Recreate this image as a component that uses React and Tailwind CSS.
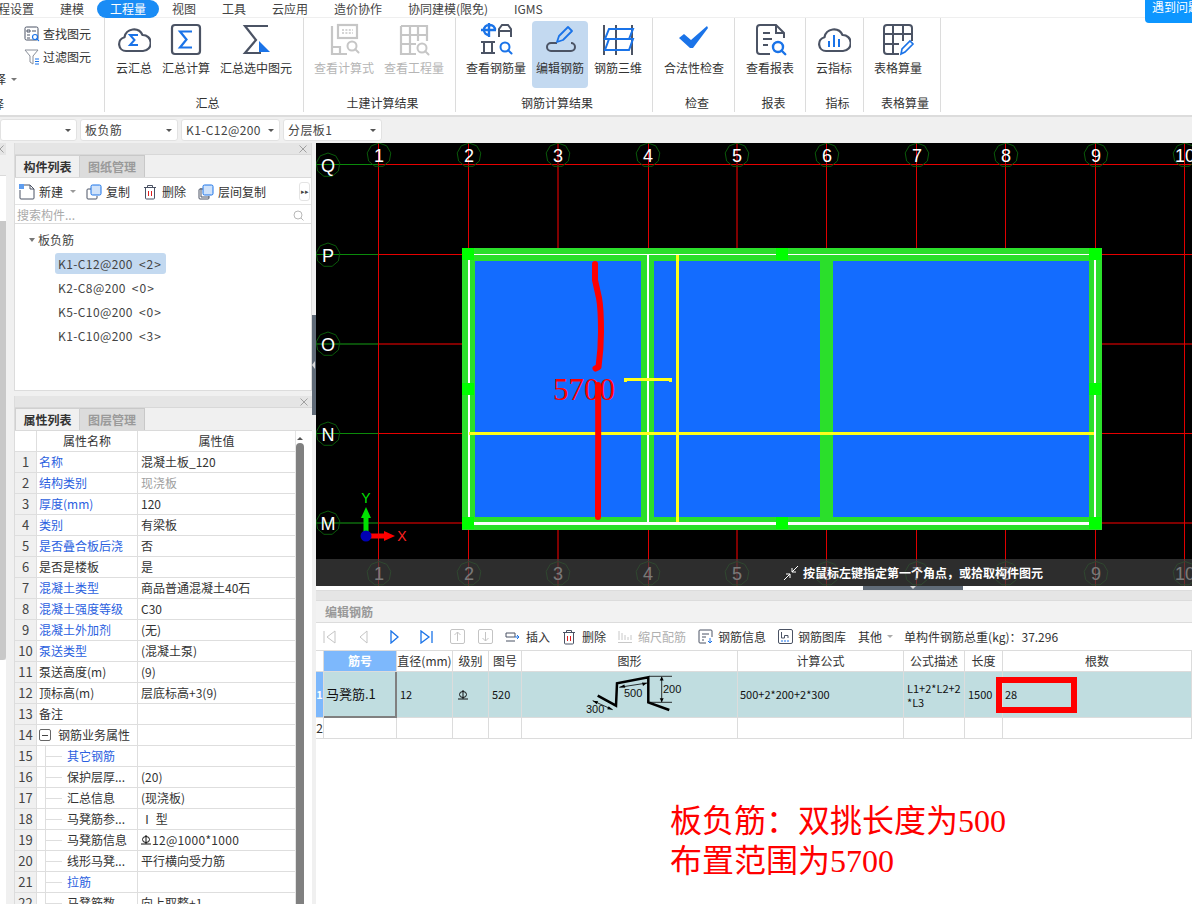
import { ChevronDown } from "lucide-react";

const DARK = "#4b5364";
const BLUE = "#1a73e8";
const GRAY = "#c6c6c6";

const CloudShape = ({ color = DARK }) => (
  <path d="M9 29a7 7 0 0 1-1.5-13.8A9.5 9.5 0 0 1 25.5 13a8 8 0 0 1 .5 16z" fill="none" stroke={color} strokeWidth="2.2" strokeLinejoin="round" />
);

const Lens = ({ x, y, r = 4, color = BLUE, w = 2 }) => (
  <g fill="none" stroke={color} strokeWidth={w}>
    <circle cx={x} cy={y} r={r} />
    <path d={`M${x + r * 0.7} ${y + r * 0.7}l${r * 0.75} ${r * 0.75}`} strokeLinecap="round" />
  </g>
);

const Icon = ({ children }) => (
  <svg width="34" height="34" viewBox="0 0 34 34" className="shrink-0">{children}</svg>
);

const icons = {
  cloudSum: (
    <Icon>
      <CloudShape />
      <path d="M21 13h-8l4.500 5-4.500 5h8" fill="none" stroke={BLUE} strokeWidth="2" />
    </Icon>
  ),
  sumBox: (
    <Icon>
      <rect x="3" y="3" width="28" height="29" rx="3" fill="none" stroke={DARK} strokeWidth="2.200" />
      <path d="M23 9.500H11l6.500 8-6.500 8h12" fill="none" stroke={BLUE} strokeWidth="2.200" />
    </Icon>
  ),
  sumPick: (
    <Icon>
      <path d="M29 4H6l11 14L6 31h16" fill="none" stroke={DARK} strokeWidth="2.200" />
      <path d="M20 19l11 11H20z" fill={BLUE} />
    </Icon>
  ),
  formula: (
    <Icon>
      <path d="M5 4v28h15M5 25h8v7" fill="none" stroke={GRAY} strokeWidth="2.200" />
      <rect x="11" y="3" width="19" height="13" fill="none" stroke={GRAY} strokeWidth="2.200" />
      <path d="M15 8h11M15 11h11" stroke={GRAY} strokeWidth="1.600" strokeDasharray="2 1.400" />
      <Lens x={25} y={24} r={4.500} color={GRAY} />
    </Icon>
  ),
  quantity: (
    <Icon>
      <path d="M4 4h26v15M4 4v28h15M4 13h26M4 22h15M13 4v28M21 4v15" fill="none" stroke={GRAY} strokeWidth="2.200" />
      <Lens x={25} y={26} r={4.500} color={GRAY} />
    </Icon>
  ),
  rebarView: (
    <Icon>
      <path d="M2 8h15M10 1v14M10 3a5 5 0 0 0 0 10M11 3a5 5 0 0 1 5 5" fill="none" stroke={BLUE} strokeWidth="2.400" />
      <path d="M20 15V7l3-4h6l3 4v8M20 9h12" fill="none" stroke={DARK} strokeWidth="2" />
      <path d="M2 20h14M2 31h14M5 20v11M13 20v11" fill="none" stroke={DARK} strokeWidth="2" />
      <Lens x={26} y={25} r={4.500} />
    </Icon>
  ),
  rebarEdit: (
    <Icon>
      <path d="M13 21H7a4 4 0 0 0 0 8h20a4 4 0 0 0 0-8" fill="none" stroke={DARK} strokeWidth="2" transform="translate(1 0)" />
      <path d="M14 20l2-6L25 5l4 4-9 9z" fill="none" stroke={BLUE} strokeWidth="1.800" strokeLinejoin="round" />
    </Icon>
  ),
  rebar3d: (
    <Icon>
      <path d="M3 3v30M15 3v30M31 3v30" stroke={DARK} strokeWidth="2" />
      <path d="M8 7h24l-4 10H4zM8 17h24l-4 11H4z" fill="none" stroke={BLUE} strokeWidth="2" />
    </Icon>
  ),
  check: (
    <Icon>
      <path d="M2 16l5-4 7 6L30 4l1 2-15 20h-3z" fill={BLUE} />
    </Icon>
  ),
  report: (
    <Icon>
      <path d="M17 32H7a3 3 0 0 1-3-3V6a3 3 0 0 1 3-3h16l8 8v5M23 3v8h8" fill="none" stroke={DARK} strokeWidth="2" />
      <path d="M10 11h7M10 17h9M10 23h5" stroke={DARK} strokeWidth="2" />
      <Lens x={25} y={25} r={5} w={2.400} />
    </Icon>
  ),
  cloudBars: (
    <Icon>
      <CloudShape />
      <path d="M12 19v6M17 13v12M22 17v8" stroke={BLUE} strokeWidth="2" />
    </Icon>
  ),
  tableEdit: (
    <Icon>
      <path d="M18 32H6a3 3 0 0 1-3-3V6a3 3 0 0 1 3-3h22a3 3 0 0 1 3 3v13M3 12h28M3 22h15M12 3v29M22 3v16" fill="none" stroke={DARK} strokeWidth="2" />
      <path d="M20 32l1-5 8-8 3 3-8 8z" fill="none" stroke={BLUE} strokeWidth="1.600" />
    </Icon>
  ),
};

const RibbonItem = ({ icon, label, gray, active }) => (
  <div className={`flex h-[67px] flex-col items-center rounded-sm px-1 pt-[1px] ${active ? "bg-[#c3d9f0]" : ""}`}>
    {icons[icon]}
    <span className={`mt-[3px] whitespace-nowrap leading-[18px] ${gray ? "text-[#b5b5b5]" : "text-[#333]"}`}>{label}</span>
  </div>
);

const RibbonGroup = ({ width, label, items, pad = "pl-[6px]" }) => (
  <div className={`flex h-[94px] shrink-0 flex-col border-r border-[#dcdcdc] pt-[3px] ${width} ${pad}`}>
    <div className="flex gap-[2px]">
      {items.map((it) => (
        <RibbonItem key={it.label} {...it} />
      ))}
    </div>
    <div className="mt-auto text-center leading-[18px] text-[#333]">{label}</div>
  </div>
);

const Select = ({ children, width }) => (
  <div className={`flex h-[22px] shrink-0 items-center justify-between rounded-[3px] border border-[#e2e2e2] bg-white pl-1 pr-[5px] tracking-[0.4px] text-[#444] ${width}`}>
    <span className="whitespace-nowrap">{children}</span>
    <span className="h-0 w-0 border-x-[3px] border-t-[3px] border-x-transparent border-t-[#555]" />
  </div>
);

const Close = () => (
  <svg width="8" height="8" viewBox="0 0 8 8"><path d="M.5.5l7 7M7.500.5l-7 7" stroke="#a0a0a0" /></svg>
);

const PanelHead = () => (
  <div className="flex h-[12px] items-center justify-end border-b border-[#d8d8d8] bg-[#e5e5e5] pr-1"><Close /></div>
);

const Tabs = ({ first, second }) => (
  <div className="flex h-[23px] border-b border-[#dadada] bg-[#f0f0f0]">
    <div className="flex w-[65px] items-center justify-center border-x border-t border-[#d0d0d0] font-bold text-[#333]">{first}</div>
    <div className="flex w-[65px] items-center justify-center border-r border-t border-[#c8c8c8] bg-[#dcdcdc] font-bold text-[#9a9a9a]">{second}</div>
  </div>
);

const CopySquare = ({ stack }) => (
  <svg width="16" height="16" viewBox="0 0 16 16">
    <path d="M5 5H2a1 1 0 0 0-1 1v8a1 1 0 0 0 1 1h8a1 1 0 0 0 1-1v-2" fill="none" stroke={DARK} />
    {stack && <path d="M3 4v9h8" fill="none" stroke={DARK} />}
    <rect x="5" y="1" width="10" height="10" rx="1.500" fill="#cfe2fa" stroke={BLUE} />
  </svg>
);

const TrashIcon = () => (
  <svg width="14" height="16" viewBox="0 0 14 16" fill="none">
    <path d="M1 3.500h12M4.500 3V1.500h5V3M2.500 3.500v10.500a1 1 0 0 0 1 1h7a1 1 0 0 0 1-1V3.500" stroke={DARK} />
    <path d="M5.500 7v5M8.500 7v5" stroke="#e02020" />
  </svg>
);

const NewIcon = () => (
  <svg width="16" height="16" viewBox="0 0 16 16" fill="none">
    <path d="M5 1h6l4 4v9a1 1 0 0 1-1 1H2a1 1 0 0 1-1-1V6M11 1v4h4" stroke={DARK} />
    <rect x="0" y="0" width="5" height="5" fill={BLUE} opacity=".7" />
  </svg>
);

const GradeMark = () => (
  <svg width="10" height="10" viewBox="0 0 10 10" fill="none" className="inline-block">
    <ellipse cx="5" cy="4.500" rx="3.500" ry="3" stroke="#111" />
    <path d="M5 0v9M0 9h10" stroke="#111" />
  </svg>
);

const listRows = ["K2-C8@200", "K5-C10@200", "K1-C10@200"];
const listCounts = ["<0>", "<0>", "<3>"];

const props = [
  ["名称", "混凝土板_120", true],
  ["结构类别", "现浇板", true, 0, "gray"],
  ["厚度(mm)", "120", true],
  ["类别", "有梁板", true],
  ["是否叠合板后浇", "否", true],
  ["是否是楼板", "是"],
  ["混凝土类型", "商品普通混凝土40石", true],
  ["混凝土强度等级", "C30", true],
  ["混凝土外加剂", "(无)", true],
  ["泵送类型", "(混凝土泵)", true],
  ["泵送高度(m)", "(9)"],
  ["顶标高(m)", "层底标高+3(9)"],
  ["备注", ""],
  ["钢筋业务属性", "", false, 2],
  ["其它钢筋", "", true, 1],
  ["保护层厚...", "(20)", false, 1],
  ["汇总信息", "(现浇板)", false, 1],
  ["马凳筋参...", "Ⅰ 型", false, 1],
  ["马凳筋信息", "12@1000*1000", false, 1, "mark"],
  ["线形马凳...", "平行横向受力筋", false, 1],
  ["拉筋", "", true, 1],
  ["马凳筋数", "向上取整+1", false, 1],
];

const PropRow = ({ n, row }) => {
  const [name, value, blue, kind, extra] = row;
  return (
    <div className="grid h-[21px] grid-cols-[22px_101px_157px] border-b border-[#dedede] leading-[20px]">
      <div className="border-r border-[#dedede] bg-[#f0f0f0] text-center text-[13px] text-[#444]">{n}</div>
      <div className={`relative flex items-center overflow-hidden whitespace-nowrap border-r border-[#dedede] ${kind === 1 ? "pl-[30px]" : kind === 2 ? "pl-[21px]" : "pl-[2px]"} ${blue ? "text-[#2b5fe0]" : "text-[#333]"}`}>
        {kind === 2 && (
          <span className="absolute left-[2px] top-[4px] flex h-[12px] w-[12px] items-center justify-center rounded-[2px] border border-[#666]">
            <span className="h-px w-[6px] bg-[#444]" />
          </span>
        )}
        {kind === 1 && (
          <>
            <span className="absolute left-[8px] top-0 h-full w-px bg-[#dedede]" />
            <span className="absolute left-[9px] top-[10px] h-px w-[16px] bg-[#dedede]" />
          </>
        )}
        {name}
      </div>
      <div className={`flex items-center gap-px whitespace-nowrap pl-[3px] ${extra === "gray" ? "text-[#a0a0a0]" : "text-[#333]"} ${extra === "mark" ? "tracking-[0.3px]" : ""}`}>
        {extra === "mark" && <GradeMark />}
        {value}
      </div>
    </div>
  );
};

const ToolBtn = ({ icon, label, gray, ml, gap = "gap-[6px]" }) => (
  <div className={`flex shrink-0 items-center ${gap} ${ml}`}>
    {icon}
    <span className={gray ? "text-[#b0b0b0]" : "text-[#333]"}>{label}</span>
  </div>
);

const colX = [
  [378.5, "1"], [468.5, "2"], [558, "3", true], [648, "4"], [737, "5", true],
  [826.5, "6"], [916.5, "7"], [1005.5, "8"], [1095.5, "9"], [1184.5, "10"],
];
const rowY = [
  [164.5, "Q"], [254.5, "P"], [344, "O", true], [433.5, "N"], [523, "M", true],
];

const ring = (cx, cy, r = 12, n = 9) =>
  Array.from({ length: n }, (_, i) => {
    const a = (i / n) * Math.PI * 2 - Math.PI / 2;
    return `${(cx + r * Math.cos(a)).toFixed(1)},${(cy + r * Math.sin(a)).toFixed(1)}`;
  }).join(" ");

const Axis = ({ cx, cy, label }) => (
  <g>
    <polygon points={ring(cx, cy)} fill="none" stroke="#0a5a0a" />
    <text x={cx} y={cy + 6.5} textAnchor="middle" fontSize="18" fill="#fff" fontFamily="'Liberation Sans', sans-serif">{label}</text>
  </g>
);

const handles = [
  [468, 254], [1095, 254], [468, 523], [1095, 523],
  [468, 389], [1095, 389], [782, 254], [782, 523],
];

const PlanCanvas = () => (
  <svg width="876" height="443" viewBox="316 143 876 443" className="block">
    <rect x="316" y="143" width="876" height="443" fill="#000" />
    <g shapeRendering="crispEdges">
      {rowY.map(([y, , dim]) => (
        <g key={y}>
          <line x1="316" x2="378" y1={y} y2={y} stroke={dim ? "#0a4f0a" : "#0b8a0b"} strokeWidth={dim ? 2 : 1} />
          <line x1="378" x2="1192" y1={y} y2={y} stroke={dim ? "#800000" : "#e60000"} strokeWidth={dim ? 2 : 1} />
        </g>
      ))}
      {colX.map(([x, , dim]) => (
        <line key={x} x1={x} x2={x} y1="143" y2="586" stroke={dim ? "#800000" : "#e00000"} strokeWidth={dim ? 2 : 1} />
      ))}
      <rect x="462" y="248" width="640" height="282" fill="#2bdf2b" />
      <rect x="475" y="261" width="614" height="256" fill="#136cff" />
      <rect x="641" y="261" width="13" height="256" fill="#2bdf2b" />
      <rect x="820" y="261" width="13" height="256" fill="#2bdf2b" />
      <g fill="#fff">
        <rect x="468" y="254" width="628" height="1" />
        <rect x="468" y="522" width="628" height="3" />
        <rect x="468" y="254" width="2" height="270" />
        <rect x="1094" y="254" width="2" height="270" />
        <rect x="647" y="254" width="2" height="269" />
      </g>
      <rect x="676" y="255" width="3" height="267" fill="#ffff1a" />
      <rect x="469" y="432" width="625" height="3" fill="#ffff1a" />
      <path d="M625 382v-3h45v3" fill="none" stroke="#ffff1a" strokeWidth="3" />
      {handles.map(([x, y]) => (
        <rect key={`${x}-${y}`} x={x - 6} y={y - 6} width="12" height="12" fill="#00ff00" />
      ))}
    </g>
    {colX.map(([x, label]) => (
      <g key={label}>
        <Axis cx={Math.round(x)} cy={155} label={label} />
        <Axis cx={Math.round(x)} cy={573.5} label={label} />
      </g>
    ))}
    {rowY.map(([y, label]) => (
      <Axis key={label} cx={328} cy={Math.round(y)} label={label} />
    ))}
    <path d="M595 264v16l4 18c2 10 2 22 2 34 0 12-1 24-2.500 35l-3 1.500" fill="none" stroke="#ff0000" strokeWidth="6" strokeLinecap="round" strokeLinejoin="round" />
    <path d="M598 385c.5 30 0 90 0 132" fill="none" stroke="#ff0000" strokeWidth="6" strokeLinecap="round" />
    <text x="553" y="400" fontSize="31" fill="#ff0000" fontFamily="'Liberation Serif', serif">5700</text>
    <line x1="366" x2="366" y1="536" y2="515" stroke="#00e000" strokeWidth="5" />
    <path d="M361 518l5-11 5 11z" fill="#00e000" />
    <line x1="366" x2="386" y1="536" y2="536" stroke="#ff0000" strokeWidth="5" />
    <path d="M384 531l11 5-11 5z" fill="#ff0000" />
    <circle cx="366" cy="536" r="5.5" fill="#0000b4" />
    <text x="366" y="503" textAnchor="middle" fontSize="14" fill="#00e000" fontFamily="'Liberation Sans', sans-serif">Y</text>
    <text x="402" y="541" textAnchor="middle" fontSize="14" fill="#ff2020" fontFamily="'Liberation Sans', sans-serif">X</text>
  </svg>
);

const BentBar = () => (
  <svg width="216" height="45" viewBox="0 0 216 45" className="absolute left-0 top-0">
    <path d="M75.700 23.700L94 33.700 95 11.300 126.300 5.300V30.300L147.300 38" fill="none" stroke="#000" strokeWidth="2.500" />
    <g stroke="#000" fill="none" strokeWidth=".8">
      <path d="M127 4.300H150M127 30.300H150M139.700 5V30" />
      <path d="M97.300 15.300L125 11M70.700 28.700L90.700 37.700" />
    </g>
    <path d="M139.700 4.500l-2 4h4zM139.700 30.300l-2-4h4zM125 11l-5 -.500 1 3.500zM97.300 15.300l5 -2.800 1 3.300zM70.700 28.700l5.500 .500-1.500 3zM90.700 37.700l-5.500 -.500 1.500-3z" fill="#000" />
    <g fontSize="11" fill="#111" fontFamily="'Liberation Sans', sans-serif">
      <text x="141" y="21">200</text>
      <text x="102" y="25">500</text>
      <text x="64" y="41">300</text>
    </g>
  </svg>
);

const cols = "grid grid-cols-[8px_73px_56px_36px_33px_216px_166px_61px_38px_189px]";
const cell = "border-r border-b border-[#dcdcdc]";
const heads = ["筋号", "直径(mm)", "级别", "图号", "图形", "计算公式", "公式描述", "长度", "根数"];

export default function App() {
  return (
    <div className="relative flex h-[904px] w-[1192px] flex-col overflow-hidden bg-[#f0f0f0] text-[12px] [font-family:'Noto_Sans_CJK_SC','Liberation_Sans',sans-serif]">
      {/* top menu */}
      <div className="relative flex h-[18px] shrink-0 items-center border-b border-[#efefef] bg-white text-[#444]">
        <span className="-ml-[14px] w-[74px] whitespace-nowrap">工程设置</span>
        <span className="w-[37px]">建模</span>
        <span className="flex h-[18px] w-[62px] items-center justify-center rounded-[9px] bg-[#1a8cf5] text-white">工程量</span>
        <span className="ml-[13px] w-[50px]">视图</span>
        <span className="w-[50px]">工具</span>
        <span className="w-[62px]">云应用</span>
        <span className="w-[74px]">造价协作</span>
        <span className="w-[106px]">协同建模(限免)</span>
        <span>IGMS</span>
        <div className="absolute right-0 top-0 h-[23px] w-[47px] overflow-hidden whitespace-nowrap rounded-bl-[4px] bg-[#0d96ff] pl-[7px] leading-[14px] text-white">遇到问题</div>
      </div>

      {/* ribbon */}
      <div className="flex h-[99px] shrink-0 border-b-2 border-[#dcdcdc] bg-white">
        <div className="relative h-[94px] w-[105px] shrink-0 border-r border-[#dcdcdc] text-[#333]">
          <div className="absolute left-[24px] top-[7px] flex items-center gap-[3px] whitespace-nowrap">
            <svg width="16" height="16" viewBox="0 0 16 16" fill="none">
              <rect x="1" y="1" width="13" height="13" rx="1.500" stroke={DARK} />
              <path d="M3 4h3v2H3zM8 5h4M3 9h3M3 12h3" stroke={DARK} />
              <Lens x={11} y={11} r={2.500} w={1.200} />
            </svg>
            查找图元
          </div>
          <div className="absolute left-[24px] top-[30px] flex items-center gap-[3px] whitespace-nowrap">
            <svg width="16" height="16" viewBox="0 0 16 16" fill="none">
              <path d="M1 1h13L9 7v8L6 13V7z" stroke="#8a8f99" />
              <path d="M11 10h4M11 12.500h4M11 15h4" stroke={BLUE} />
            </svg>
            过滤图元
          </div>
          <div className="absolute left-[-18px] top-[52px] flex items-center gap-[5px] whitespace-nowrap">
            选择
            <span className="h-0 w-0 border-x-[3px] border-t-[3px] border-x-transparent border-t-[#777]" />
          </div>
          <div className="absolute -left-[20px] top-[77px] whitespace-nowrap">选择</div>
        </div>
        <RibbonGroup width="w-[199px]" pad="pl-[7px]" label="汇总" items={[{ icon: "cloudSum", label: "云汇总" }, { icon: "sumBox", label: "汇总计算" }, { icon: "sumPick", label: "汇总选中图元" }]} />
        <RibbonGroup width="w-[152px]" label="土建计算结果" items={[{ icon: "formula", label: "查看计算式", gray: true }, { icon: "quantity", label: "查看工程量", gray: true }]} />
        <RibbonGroup width="w-[197px]" label="钢筋计算结果" items={[{ icon: "rebarView", label: "查看钢筋量" }, { icon: "rebarEdit", label: "编辑钢筋", active: true }, { icon: "rebar3d", label: "钢筋三维" }]} />
        <RibbonGroup width="w-[82px]" pad="pl-[7px]" label="检查" items={[{ icon: "check", label: "合法性检查" }]} />
        <RibbonGroup width="w-[71px]" pad="pl-[7px]" label="报表" items={[{ icon: "report", label: "查看报表" }]} />
        <RibbonGroup width="w-[58px]" pad="pl-[6px]" label="指标" items={[{ icon: "cloudBars", label: "云指标" }]} />
        <RibbonGroup width="w-[77px]" pad="pl-[6px]" label="表格算量" items={[{ icon: "tableEdit", label: "表格算量" }]} />
      </div>

      {/* selectors */}
      <div className="flex h-[26px] shrink-0 items-center gap-[3px]">
        <Select width="w-[77px]"> </Select>
        <Select width="w-[98px]">板负筋</Select>
        <Select width="w-[99px]">K1-C12@200</Select>
        <Select width="w-[99px]">分层板1</Select>
      </div>

      <div className="flex min-h-0 flex-1">
        {/* collapsed neighbour panel */}
        <div className="flex w-[14px] shrink-0 flex-col">
          <div className="flex h-[12px] w-[6px] items-center overflow-hidden bg-[#e5e5e5]"><span className="-ml-1"><Close /></span></div>
          <div className="h-[21px] w-[6px] border-b border-[#dadada]" />
          <div className="h-[45px] w-[6px] bg-white" />
          <div className="h-[439px] w-[6px] rounded-br-[3px] bg-[#c8c8c8]" />
          <div className="w-[6px] flex-1 bg-white" />
        </div>

        {/* left panels */}
        <div className="flex w-[298px] shrink-0 flex-col">
          <div className="flex h-[248px] flex-col border-x border-b border-[#dcdcdc] bg-white">
            <PanelHead />
            <Tabs first="构件列表" second="图纸管理" />
            <div className="flex h-[27px] shrink-0 items-center border-b border-[#e4e4e4] pl-[4px] pt-px text-[#333]">
              <ToolBtn gap="gap-[4px]" icon={<NewIcon />} label="新建" />
              <span className="ml-[7px] h-0 w-0 border-x-[3px] border-t-[3px] border-x-transparent border-t-[#999]" />
              <ToolBtn gap="gap-[4px]" icon={<CopySquare />} label="复制" ml="ml-[10px]" />
              <ToolBtn gap="gap-[5px]" icon={<TrashIcon />} label="删除" ml="ml-[13px]" />
              <ToolBtn gap="gap-[4px]" icon={<CopySquare stack />} label="层间复制" ml="ml-[12px]" />
              <span className="ml-auto mr-[1px] flex h-[19px] w-[11px] items-center justify-center rounded-[3px] border border-[#e4e4e4] text-[7px] leading-none text-[#444]">▸▸</span>
            </div>
            <div className="flex h-[19px] shrink-0 items-center justify-between border-b border-[#dcdcdc] pl-[2px] pr-[7px] pt-[2px] text-[#aaa]">
              <span>搜索构件...</span>
              <Lens2 />
            </div>
            <div className="flex flex-col pl-[14px] text-[#444]">
              <div className="mt-[7px] flex h-[18px] items-center gap-[2px]">
                <span className="h-0 w-0 border-x-[3.500px] border-t-[4px] border-x-transparent border-t-[#777]" />
                <span className="ml-[1px]">板负筋</span>
              </div>
              <div className="ml-[26px] mt-[4px] flex h-[21px] w-[111px] items-center gap-[6px] rounded-[3px] bg-[#c3d9f0] pl-[3px] tracking-[0.4px]">
                K1-C12@200 <span className="tracking-[1px]">&lt;2&gt;</span>
              </div>
              {listRows.map((r, i) => (
                <div key={r} className="ml-[26px] mt-[3px] flex h-[21px] items-center gap-[6px] pl-[3px] tracking-[0.4px]">
                  {r} <span className="tracking-[1px]">{listCounts[i]}</span>
                </div>
              ))}
            </div>
          </div>
          <div className="h-[5px] shrink-0" />
          <div className="flex min-h-0 flex-1 flex-col overflow-hidden border-l border-[#dcdcdc] bg-white">
            <PanelHead />
            <Tabs first="属性列表" second="图层管理" />
            <div className="flex min-h-0 flex-1">
              <div className="w-[280px] shrink-0">
                <div className="grid h-[21px] grid-cols-[22px_101px_157px] border-b border-[#dedede] text-center leading-[20px] text-[#333]">
                  <div className="border-r border-[#dedede]" />
                  <div className="border-r border-[#dedede]">属性名称</div>
                  <div>属性值</div>
                </div>
                {props.map((row, i) => (
                  <PropRow key={row[0]} n={i + 1} row={row} />
                ))}
              </div>
              <div className="flex flex-1 flex-col items-center border-l border-[#e4e4e4] pr-[8px] pt-[6px]">
                <span className="h-0 w-0 border-x-[3px] border-b-[3px] border-x-transparent border-b-[#555]" />
                <div className="mt-[3px] w-[8px] flex-1 rounded-t-[4px] bg-[#808080]" />
              </div>
            </div>
          </div>
        </div>

        {/* splitter */}
        <div className="w-[4px] shrink-0">
          <div className="mt-[172px] flex h-[100px] items-center bg-[#606b78]">
            <span className="h-0 w-0 border-y-[4px] border-r-[3px] border-y-transparent border-r-[#d8d8d8]" />
          </div>
        </div>

        {/* right side */}
        <div className="flex min-w-0 flex-1 flex-col">
          <div className="relative h-[443px] shrink-0 overflow-hidden">
            <PlanCanvas />
            <div className="absolute inset-x-0 bottom-0 flex h-[27px] items-center bg-[#404040]/70 pl-[467px] font-bold text-white">
              <svg width="16" height="16" viewBox="0 0 16 16" fill="none" stroke="#fff" className="mr-[4px]">
                <path d="M15 1L9 7M9 3v4h4M1 15l6-6M3 9h4v4" />
              </svg>
              按鼠标左键指定第一个角点，或拾取构件图元
            </div>
          </div>
          <div className="flex h-[4px] shrink-0 bg-white pl-[547px]">
            <div className="flex h-[4px] w-[100px] justify-center bg-[#606b78]">
              <span className="h-0 w-0 border-x-[3px] border-t-[3px] border-x-transparent border-t-[#ddd]" />
            </div>
          </div>

          {/* rebar editor */}
          <div className="relative flex min-h-0 flex-1 flex-col bg-white">
            <div className="h-[11px] shrink-0 border-y border-[#dcdcdc] bg-[#e5e5e5]" />
            <div className="flex h-[22px] shrink-0 items-center border-b border-[#dcdcdc] bg-[#f2f2f2] pl-[9px] font-bold text-[#999]">编辑钢筋</div>
            <div className="flex h-[28px] shrink-0 items-center border-b border-[#dcdcdc] pl-[7px] text-[#333]">
              <svg width="13" height="14" viewBox="0 0 13 14" fill="none" stroke="#c4c4c4"><path d="M1 1v12M12 1L4 7l8 6z" /></svg>
              <svg width="10" height="14" viewBox="0 0 10 14" fill="none" stroke="#c4c4c4" className="ml-[23px]"><path d="M8 1L1 7l7 6z" /></svg>
              <svg width="10" height="14" viewBox="0 0 10 14" fill="none" stroke={BLUE} strokeWidth="1.300" className="ml-[20px]"><path d="M2 1l7 6-7 6z" /></svg>
              <svg width="13" height="14" viewBox="0 0 13 14" fill="none" stroke={BLUE} strokeWidth="1.300" className="ml-[21px]"><path d="M1 1l8 6-8 6zM12 1v12" /></svg>
              <svg width="15" height="15" viewBox="0 0 15 15" fill="none" stroke="#c4c4c4" className="ml-[17px]"><rect x=".5" y=".5" width="14" height="14" rx="1.500" /><path d="M7.500 12V3M4.500 6l3-3 3 3" /></svg>
              <svg width="15" height="15" viewBox="0 0 15 15" fill="none" stroke="#c4c4c4" className="ml-[13px]"><rect x=".5" y=".5" width="14" height="14" rx="1.500" /><path d="M7.500 3v9M4.500 9l3 3 3-3" /></svg>
              <ToolBtn ml="ml-[12px]" label="插入" icon={
                <svg width="15" height="14" viewBox="0 0 15 14" fill="none">
                  <path d="M1 1h9v4H1zM1 9h9" stroke={DARK} transform="translate(0 2)" />
                  <path d="M10 7h4M12 5l2 2-2 2" stroke={BLUE} />
                </svg>
              } />
              <ToolBtn ml="ml-[12px]" label="删除" icon={<TrashIcon />} />
              <ToolBtn ml="ml-[12px]" gray label="缩尺配筋" icon={
                <svg width="14" height="14" viewBox="0 0 14 14" fill="none" stroke="#c8c8c8">
                  <path d="M1 1v9M4 3v7M7 5v5M10 7v3M13 5v5M0 12.500h14" />
                </svg>
              } />
              <ToolBtn ml="ml-[12px]" gap="gap-[4px]" label="钢筋信息" icon={
                <svg width="16" height="16" viewBox="0 0 16 16" fill="none">
                  <path d="M8 14H2a1 1 0 0 1-1-1V2a1 1 0 0 1 1-1h11a1 1 0 0 1 1 1v6M4 5h7M4 8h4M4 11h2" stroke={DARK} />
                  <path d="M12 9v5M10 12l2 2 2-2" stroke={BLUE} />
                </svg>
              } />
              <ToolBtn ml="ml-[12px]" gap="gap-[5px]" label="钢筋图库" icon={
                <svg width="15" height="15" viewBox="0 0 15 15" fill="none">
                  <rect x=".5" y=".5" width="14" height="14" rx="1.500" stroke={DARK} />
                  <path d="M3.500 3v6h3V6.500h3.500V9" stroke={DARK} />
                  <path d="M3 12h9" stroke={BLUE} strokeDasharray="2 1" />
                </svg>
              } />
              <span className="ml-[12px]">其他</span>
              <span className="ml-[5px] h-0 w-0 border-x-[3px] border-t-[3px] border-x-transparent border-t-[#aaa]" />
              <span className="ml-[11px] whitespace-nowrap">单构件钢筋总重(kg)：37.296</span>
            </div>

            <div className={`${cols} h-[21px] shrink-0 leading-[20px] text-[#333]`}>
              <div className={cell} />
              {heads.map((h, i) => (
                <div key={h} className={`whitespace-nowrap text-center ${cell} ${i === 0 ? "bg-[#7db8fc] font-bold text-white" : ""}`}>{h}</div>
              ))}
            </div>
            <div className={`${cols} h-[46px] shrink-0 text-[11px] text-[#111]`}>
              <div className={`flex items-center justify-center bg-[#7db8fc] font-bold text-white ${cell}`}>1</div>
              <div className="flex items-center border-b-2 border-r-2 border-[#808080] bg-[#c0dde0] pl-[2px] text-[13px]">马凳筋.1</div>
              <div className={`flex items-center bg-[#c0dde0] pl-[3px] ${cell}`}>12</div>
              <div className={`flex items-center bg-[#c0dde0] pl-[5px] ${cell}`}><GradeMark /></div>
              <div className={`flex items-center bg-[#c0dde0] pl-[3px] ${cell}`}>520</div>
              <div className={`relative bg-[#c0dde0] ${cell}`}><BentBar /></div>
              <div className={`flex items-center whitespace-nowrap bg-[#c0dde0] pl-[2px] ${cell}`}>500+2*200+2*300</div>
              <div className={`flex items-center bg-[#c0dde0] pl-[3px] leading-[14px] ${cell}`}>L1+2*L2+2<br />*L3</div>
              <div className={`flex items-center bg-[#c0dde0] pl-[3px] ${cell}`}>1500</div>
              <div className={`flex items-center bg-[#c0dde0] pl-[2px] ${cell}`}>28</div>
            </div>
            <div className={`${cols} h-[21px] shrink-0 text-[#333]`}>
              <div className={`text-center leading-[20px] ${cell}`}>2</div>
              {heads.map((h) => (
                <div key={h} className={cell} />
              ))}
            </div>

            {/* markup drawn over the grid */}
            <div className="absolute left-[680px] top-[87px] h-[36px] w-[81px] border-[6px] border-[#ff0000]" />
            <div className="absolute left-[354px] top-[211px] text-[32px] leading-[40px] text-[#ff0000] [font-family:'Liberation_Serif','Noto_Sans_CJK_SC',serif]">
              板负筋：双挑长度为500<br />布置范围为5700
            </div>
          </div>
        </div>
      </div>
    </div>
  );
}

function Lens2() {
  return (
    <svg width="11" height="11" viewBox="0 0 11 11" fill="none" stroke="#b8b8b8">
      <circle cx="5" cy="5" r="4" />
      <path d="M8 8l2.500 2.500" />
    </svg>
  );
}
